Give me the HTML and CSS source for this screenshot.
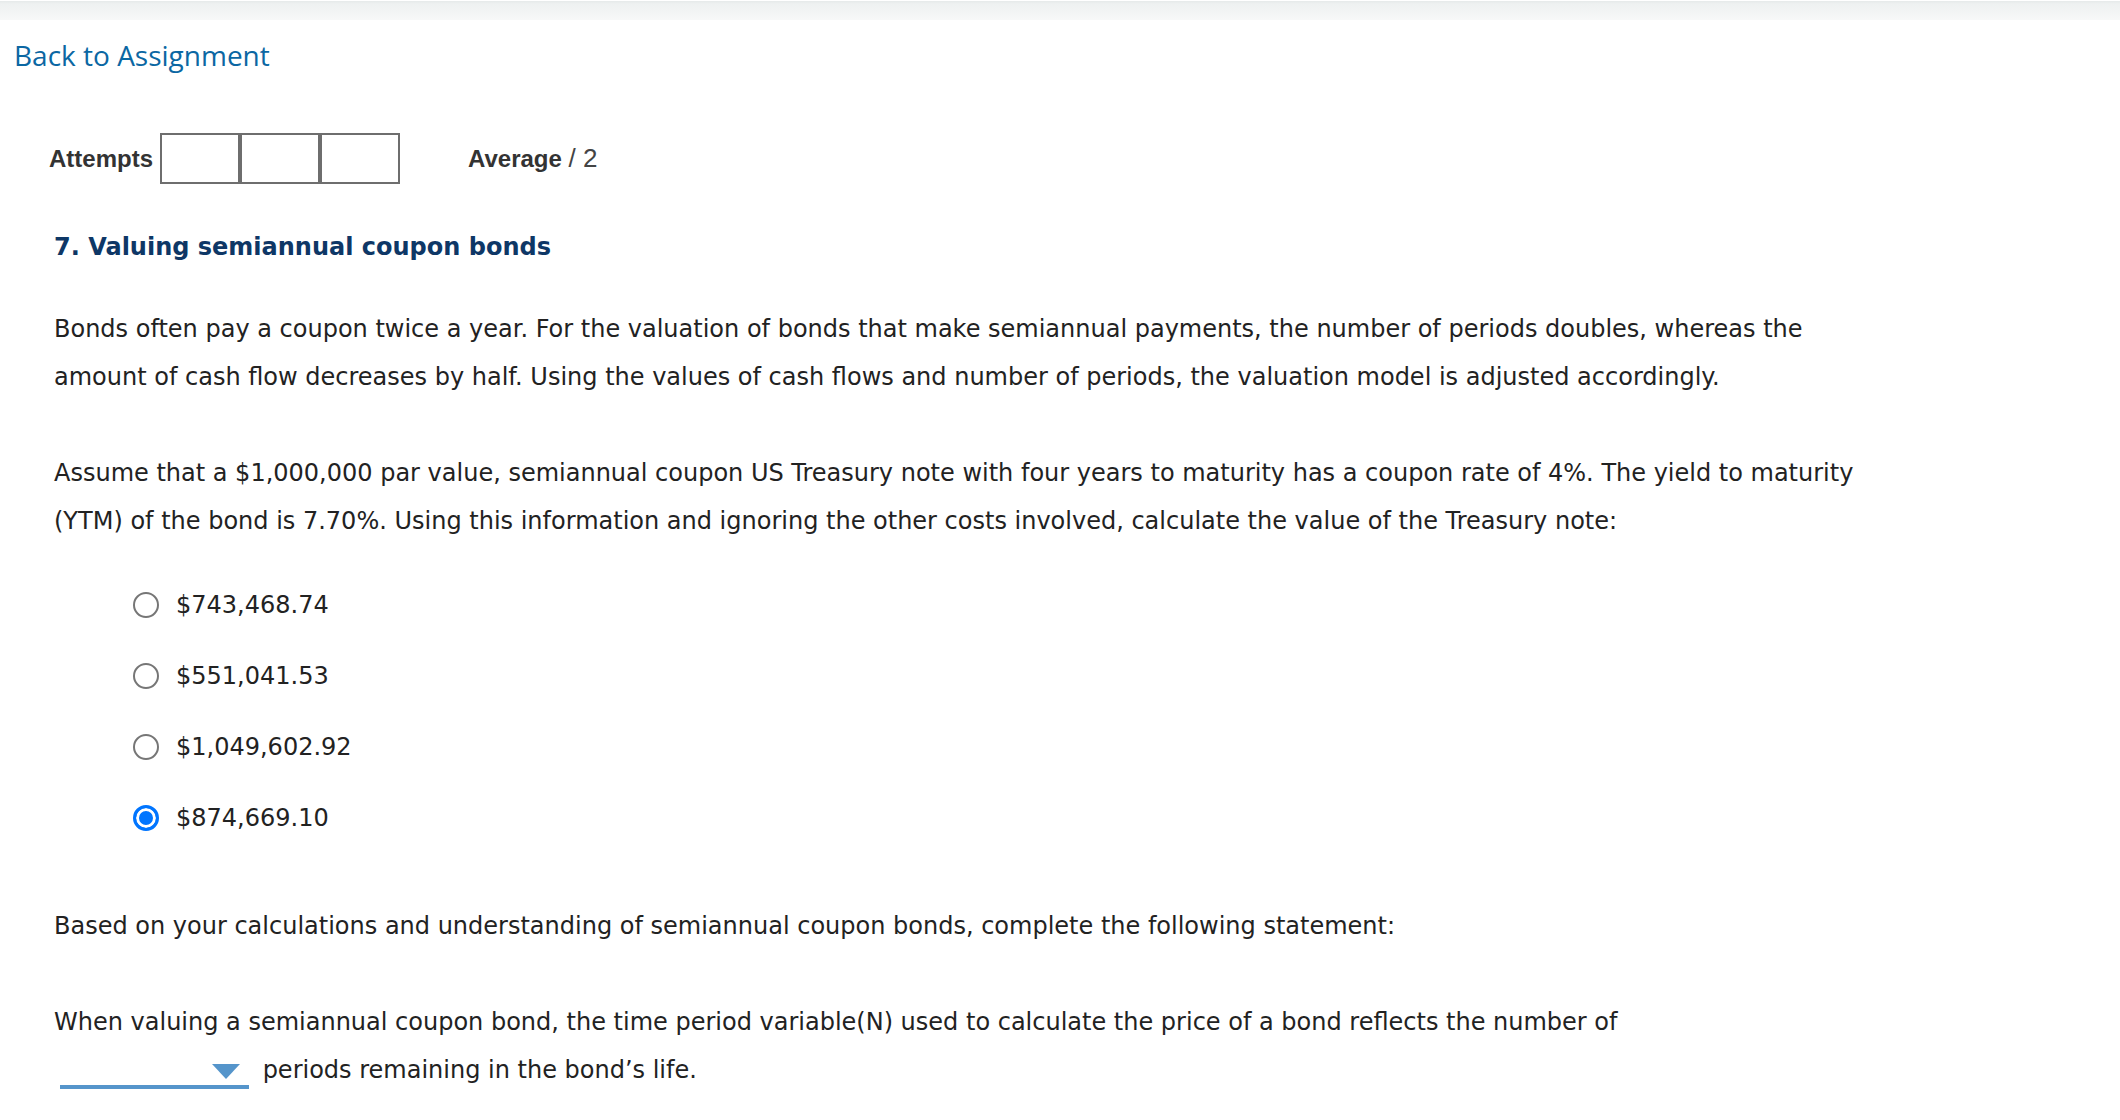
FILE: index.html
```html
<!DOCTYPE html>
<html lang="en">
<head>
    <meta charset="UTF-8">
    <meta name="viewport" content="width=device-width, initial-scale=1.0">
    <title>Valuing semiannual coupon bonds</title>
    <link rel="stylesheet" href="styles.css">
</head>
<body>
    <div class="topbar"></div>

    <div class="back">
        <a href="#">Back to Assignment</a>
    </div>

    <!-- Attempts / score -->
    <div class="attempts">
        <span class="attempts-label">Attempts</span>
        <div class="attempt-boxes">
            <span class="attempt-box"></span>
            <span class="attempt-box"></span>
            <span class="attempt-box"></span>
        </div>
        <span class="average"><b>Average</b> <span class="score">/ 2</span></span>
    </div>

    <div class="question">
        <h2 class="question-title">7. Valuing semiannual coupon bonds</h2>

        <p class="intro">Bonds often pay a coupon twice a year. For the valuation of bonds that make semiannual payments, the number of periods doubles, whereas the<br>amount of cash flow decreases by half. Using the values of cash flows and number of periods, the valuation model is adjusted accordingly.</p>

        <p class="prompt">Assume that a $1,000,000 par value, semiannual coupon US Treasury note with four years to maturity has a coupon rate of 4%. The yield to maturity<br>(YTM) of the bond is 7.70%. Using this information and ignoring the other costs involved, calculate the value of the Treasury note:</p>

        <div class="choices">
            <label class="choice"><input type="radio" name="q7"> $743,468.74</label>
            <label class="choice"><input type="radio" name="q7"> $551,041.53</label>
            <label class="choice"><input type="radio" name="q7"> $1,049,602.92</label>
            <label class="choice"><input type="radio" name="q7" checked> $874,669.10</label>
        </div>

        <p class="statement">Based on your calculations and understanding of semiannual coupon bonds, complete the following statement:</p>

        <p class="fill">When valuing a semiannual coupon bond, the time period variable(N) used to calculate the price of a bond reflects the number of<br><span class="dropdown"><span class="dropdown-arrow"></span></span> periods remaining in the bond’s life.</p>
    </div>
</body>
</html>
```

FILE: styles.css
```css
body {
    margin: 0;
    font-family: "DejaVu Sans", Verdana, sans-serif;
    color: #222;
    background: #fff;
}

.topbar {
    height: 19px;
    border-top: 1px solid #fff;
    background: linear-gradient(#e6eaea 0, #eef1f1 3px, #f7f8f8 100%);
}

.back {
    padding: 16px 0 0 14px;
    font-family: "Open Sans", sans-serif;
    font-size: 28px;
    line-height: 38px;
}

.back a {
    color: #0b67a3;
    text-decoration: none;
}

/* attempts row */
.attempts {
    display: flex;
    align-items: center;
    margin-top: 59px;
    padding-left: 49px;
    font-family: "Liberation Sans", Arial, sans-serif;
    font-size: 24px;
    color: #333;
}

.attempts-label {
    font-weight: bold;
    margin-right: 7px;
}

.attempt-boxes {
    display: flex;
}

.attempt-box {
    width: 80px;
    height: 51px;
    box-sizing: border-box;
    border: 2px solid #6e6e6e;
}

.average {
    margin-left: 68px;
    color: #333;
}

.average .score {
    font-size: 26px;
    color: #444;
}

/* question body */
.question {
    padding: 0 20px 0 54px;
}

.question-title {
    margin: 39px 0 0;
    font-size: 24px;
    line-height: 48px;
    font-weight: bold;
    color: #0e3766;
}

.question p {
    margin: 0;
    font-size: 24px;
    line-height: 48px;
}

.question .intro {
    margin-top: 34px;
}

.question .prompt {
    margin-top: 48px;
}

.choices {
    margin-top: 24px;
    padding-left: 79px;
}

.choice {
    display: flex;
    align-items: center;
    gap: 17px;
    height: 71px;
    font-size: 24px;
}

.choice input {
    appearance: none;
    width: 26px;
    height: 26px;
    margin: 0;
    border: 2px solid #767676;
    border-radius: 50%;
    background: #fff;
}

.choice input:checked {
    border: 3px solid #0075ff;
    background: #0075ff;
    box-shadow: inset 0 0 0 3px #fff;
}

.question .statement {
    margin-top: 49px;
}

.question .fill {
    margin-top: 48px;
}

.dropdown {
    display: inline-flex;
    justify-content: flex-end;
    align-items: center;
    width: 189px;
    height: 32px;
    box-sizing: border-box;
    padding-right: 9px;
    margin: 0 6px 5px 6px;
    border-bottom: 4px solid #5595cb;
    vertical-align: bottom;
}

.dropdown-arrow {
    width: 0;
    height: 0;
    border-left: 14px solid transparent;
    border-right: 14px solid transparent;
    border-top: 15px solid #5595cb;
}
```
